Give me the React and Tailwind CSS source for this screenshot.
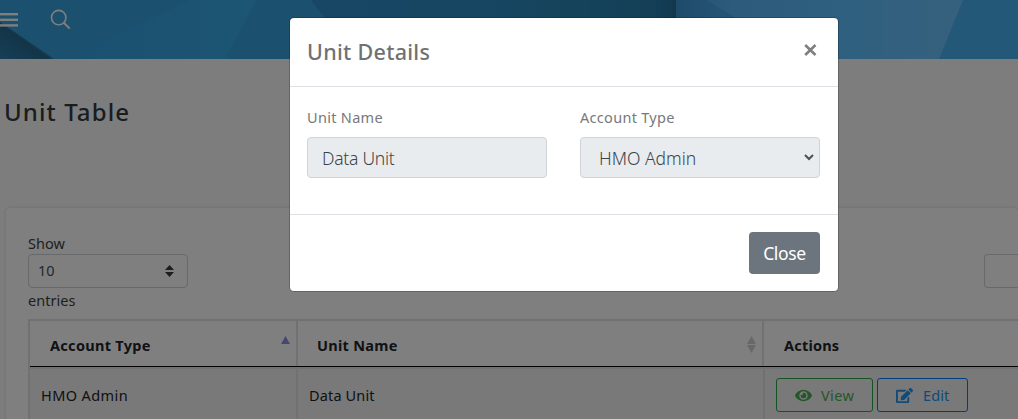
import React from "react";
import { FaEye, FaEdit } from "react-icons/fa";

function Banner() {
  return (
    <header className="relative h-[59px] shrink-0 overflow-hidden bg-[#36a0de]">
      <svg className="absolute inset-0" width="1018" height="59" viewBox="0 0 1018 59" aria-hidden="true">
        <defs>
          <linearGradient id="sheen" x1="0" x2="1">
            <stop offset="0" stopColor="#36a2e0" />
            <stop offset="1" stopColor="#3aaae8" />
          </linearGradient>
          <linearGradient id="mid" gradientUnits="userSpaceOnUse" x1="311" y1="0" x2="676" y2="0">
            <stop offset="0" stopColor="#308ecc" />
            <stop offset="0.5" stopColor="#2e8cc4" />
            <stop offset="0.75" stopColor="#2a86b6" />
            <stop offset="0.94" stopColor="#287eae" />
            <stop offset="1" stopColor="#24709a" />
          </linearGradient>
          <linearGradient id="right" gradientUnits="userSpaceOnUse" x1="676" y1="0" x2="963" y2="0">
            <stop offset="0" stopColor="#4aa4e4" />
            <stop offset="0.2" stopColor="#58b6f6" />
            <stop offset="0.6" stopColor="#60c0ff" />
            <stop offset="1" stopColor="#6cc2fa" />
          </linearGradient>
          <linearGradient id="crease" gradientUnits="userSpaceOnUse" x1="676" y1="0" x2="720" y2="0">
            <stop offset="0" stopColor="#3e96d4" />
            <stop offset="1" stopColor="#48a8ea" />
          </linearGradient>
          <linearGradient id="fold" gradientUnits="userSpaceOnUse" x1="8" y1="62" x2="27" y2="36">
            <stop offset="0" stopColor="#2c7cac" />
            <stop offset="0.8" stopColor="#286a90" />
            <stop offset="1" stopColor="#2c7ca8" />
          </linearGradient>
        </defs>
        <rect width="1018" height="59" fill="#36a0de" />
        <polygon points="65,59 190,0 256,0 225,59" fill="url(#sheen)" />
        <polygon points="0,22 54,59 0,59" fill="url(#fold)" />
        <polygon points="311,0 676,0 676,59 354,59" fill="url(#mid)" />
        <rect x="676" width="342" height="59" fill="url(#right)" />
        <polygon points="676,0 706,0 736,18 736,59 676,59" fill="url(#crease)" />
        <polygon points="963,0 1018,0 1018,59 939,59" fill="#48b0f2" />
      </svg>
      <div className="relative flex items-start pt-[9px]">
        <svg width="18" height="20" viewBox="0 0 18 20" fill="#fff" className="shrink-0">
          <rect y="4" width="18" height="2.4" />
          <rect y="9.6" width="18" height="2.4" />
          <rect y="15.2" width="18" height="2.4" />
        </svg>
        <svg width="21" height="21" viewBox="0 0 21 21" fill="none" stroke="#fff" strokeWidth="1.6" className="ml-[32px] shrink-0">
          <circle cx="8.7" cy="8.6" r="7.2" />
          <path d="M13.8 13.7 19.7 19.6" strokeWidth="2" />
        </svg>
      </div>
    </header>
  );
}

function SortIcon({ active }) {
  return active ? (
    <svg width="9" height="8" viewBox="0 0 9 8" className="mt-[15px]"><path d="M4.5 0 9 8H0z" fill="#8c8ce6" /></svg>
  ) : (
    <svg width="9" height="17" viewBox="0 0 9 17" className="mt-[15px]">
      <path d="M4.5 0 9 8H0zM0 9H9L4.5 17z" fill="#d0d0d0" />
    </svg>
  );
}

function UnitTable() {
  return (
    <div className="mt-[8px] w-[1020px] border-l-2 border-t-2 border-[#dee2e6] text-[14.5px]">
      <div className="flex h-[46px] border-b border-black font-bold text-[#212529]">
        <div className="flex w-[268px] justify-between border-r-2 border-[#dee2e6] pl-[20px] pr-[6px]">
          <span className="leading-[48px] tracking-[0.3px]">Account Type</span>
          <SortIcon active />
        </div>
        <div className="flex w-[466px] justify-between border-r-2 border-[#dee2e6] pl-[19px] pr-[6px]">
          <span className="leading-[48px] tracking-[0.3px]">Unit Name</span>
          <SortIcon />
        </div>
        <div className="pl-[20px] leading-[48px] tracking-[0.2px]">Actions</div>
      </div>
      <div className="flex h-[60px] border-t-2 border-[#dee2e6] bg-[#f2f2f2] leading-[52px] text-[#212529]">
        <div className="w-[268px] border-r-2 border-[#dee2e6] pl-[11px] tracking-[0.4px]">HMO Admin</div>
        <div className="w-[467px] border-r-2 border-[#dee2e6] pl-[11px] tracking-[0.15px]">Data Unit</div>
        <div className="flex items-start gap-1 pl-[11px] pt-[9px]">
          <button className="flex h-[34px] w-[97px] items-center rounded-[3px] border border-[#28a745] pl-[18px] leading-[32px] text-[#4cae50]">
            <FaEye size={17} />
            <span className="ml-[9px] tracking-[0.4px]">View</span>
          </button>
          <button className="flex h-[34px] w-[91px] items-center rounded-[3px] border border-[#007bff] pl-[18px] leading-[32px] text-[#2196f3]">
            <FaEdit size={17} />
            <span className="ml-[10px] tracking-[0.1px]">Edit</span>
          </button>
        </div>
      </div>
    </div>
  );
}

function UnitModal() {
  return (
    <section className="absolute left-[290px] top-[18px] flex h-[273px] w-[548px] flex-col rounded-[4px] bg-white shadow-[0_0_0_1px_rgba(0,0,0,0.2)]">
      <div className="flex h-[69px] shrink-0 justify-between border-b border-[#dee2e6] pl-[17px] pr-[21px]">
        <h2 className="text-[21.5px] font-medium leading-[68px] tracking-[0.3px] text-[#6e7274]">Unit Details</h2>
        <svg width="13" height="12" viewBox="0 0 13 12" className="mt-[26px]" stroke="#7f7f7f" strokeWidth="2.6">
          <path d="M1.2 1 11.5 11M11.5 1 1.2 11" />
        </svg>
      </div>
      <div className="flex h-[127px] shrink-0 gap-[33px] pl-[17px] pt-[20px] text-[#76797b]">
        <div className="w-[240px]">
          <div className="h-[30px] text-[14.5px] leading-[20px] tracking-[0.3px]">Unit Name</div>
          <div className="h-[41px] rounded-[4px] border border-[#ced4da] bg-[#e9ecef] pl-[14px] text-[17.5px] font-light leading-[40px] tracking-[-0.25px] text-[#3c4349]"><span>Data Unit</span></div>
        </div>
        <div className="w-[240px]">
          <div className="h-[30px] text-[14.5px] leading-[20px] tracking-[0.3px]">Account Type</div>
          <div className="flex h-[41px] justify-between rounded-[4px] border border-[#ced4da] bg-[#e9ecef] pl-[18px] pr-[5px] text-[17.5px] font-light leading-[40px] tracking-[0px] text-[#3c4349]">
            <span>HMO Admin</span>
            <svg width="10" height="7" viewBox="0 0 10 7" fill="none" stroke="#495057" strokeWidth="2" className="mt-[16px]"><path d="M1 1 5 5 9 1" /></svg>
          </div>
        </div>
      </div>
      <div className="flex flex-1 justify-end border-t border-[#dee2e6] pr-[18px] pt-[17px]">
        <button className="h-[42px] w-[71px] rounded-[4px] bg-[#6c757d] text-center text-[17.5px] leading-[43px] tracking-[-0.35px] text-white"><span>Close</span></button>
      </div>
    </section>
  );
}

export default function App() {
  return (
    <div className="relative h-[419px] w-[1018px] overflow-hidden whitespace-nowrap bg-[#fafafa] font-['Noto_Sans',sans-serif]">
      <main className="flex h-full flex-col">
        <Banner />
        <h1 className="h-[149px] shrink-0 pl-[4px] text-[24px] font-medium leading-[105px] tracking-[1.1px] text-[#343a40]">Unit Table</h1>
        <div className="ml-[6px] h-[240px] shrink-0 rounded-[4px] bg-white pl-[22px] pt-[25px] text-[14.5px] tracking-[0.05px] text-[#3e3e3e] shadow-[0_0_3px_rgba(0,0,0,0.16)]">
          <div className="h-[21px] leading-[21px]">Show</div>
          <div className="flex justify-between">
            <div className="flex h-[34px] w-[160px] items-center justify-between rounded-[4px] border border-[#ced4da] pl-[9px] pr-[13px] text-[#495057]">
              <span>10</span>
              <svg width="9" height="12" viewBox="0 0 9 12" fill="#343a40"><path d="M4.5 0 9 5H0zM0 7H9L4.5 12z" /></svg>
            </div>
            <div className="h-[34px] w-[34px] rounded-l-[4px] border border-r-0 border-[#ced4da]" />
          </div>
          <div className="h-[23px] leading-[24px]">entries</div>
          <UnitTable />
        </div>
      </main>
      <div className="absolute inset-0 bg-black/50" />
      <UnitModal />
    </div>
  );
}
